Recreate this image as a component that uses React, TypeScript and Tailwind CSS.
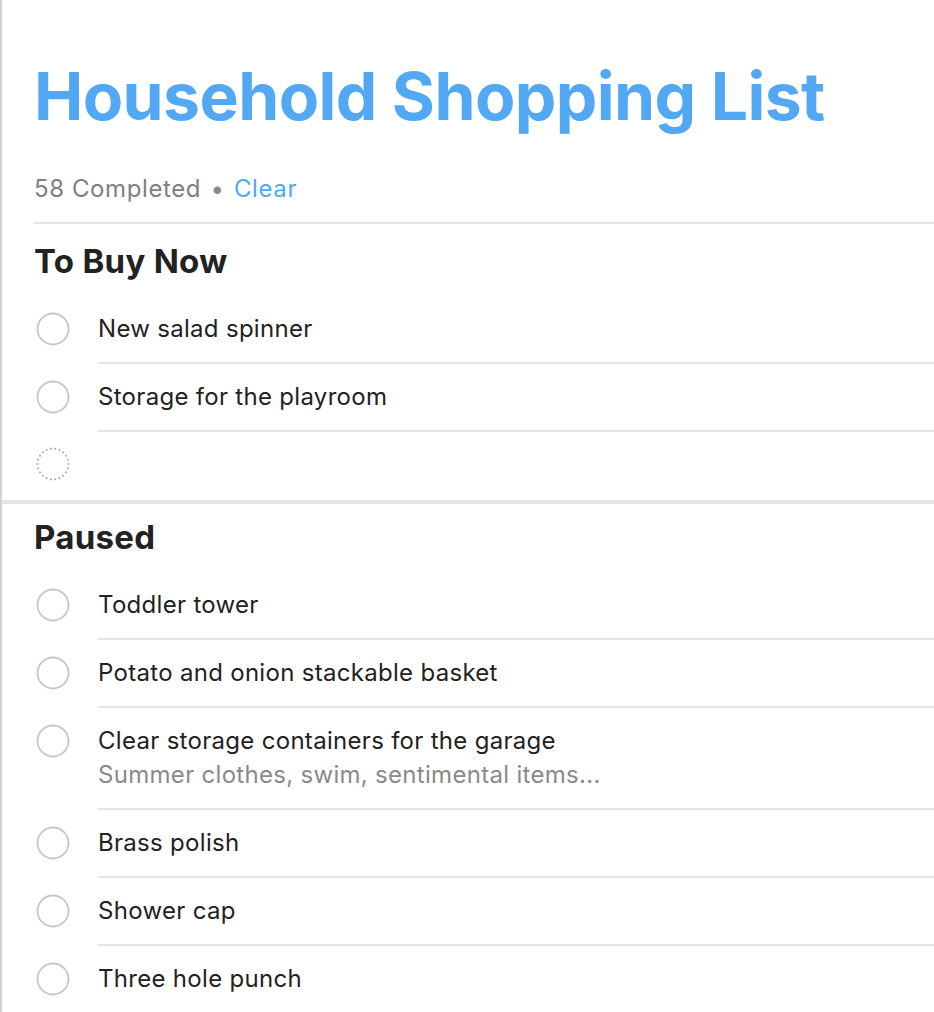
import React from 'react';

interface Item {
  title: string;
  note?: string;
}

const toBuyNow: Item[] = [
  { title: 'New salad spinner' },
  { title: 'Storage for the playroom' },
];

const paused: Item[] = [
  { title: 'Toddler tower' },
  { title: 'Potato and onion stackable basket' },
  { title: 'Clear storage containers for the garage', note: 'Summer clothes, swim, sentimental items...' },
  { title: 'Brass polish' },
  { title: 'Shower cap' },
  { title: 'Three hole punch' },
];

function Circle({ dotted = false }: { dotted?: boolean }) {
  return (
    <svg width="34" height="34" viewBox="0 0 34 34" className="shrink-0">
      <circle
        cx="17"
        cy="17"
        r="15.5"
        fill="none"
        stroke={dotted ? '#a9a9a9' : '#c7c7c7'}
        strokeWidth={dotted ? 2 : 1.8}
        strokeDasharray={dotted ? '0.1 4.3' : undefined}
        strokeLinecap="round"
      />
    </svg>
  );
}

function Row({ item, last }: { item: Item; last?: boolean }) {
  return (
    <div className="flex">
      <div className="w-[96px] shrink-0 pl-[34px] pt-[16px]">
        <Circle />
      </div>
      <div className={`flex-1 py-[16px] ${last ? '' : 'border-b-2 border-[#e4e4e4]'}`}>
        <div className="text-[24px] leading-[34px] tracking-[0.3px] text-[#222]">{item.title}</div>
        {item.note && (
          <div className="text-[24px] leading-[34px] tracking-[0.3px] text-[#8a8a8a]">{item.note}</div>
        )}
      </div>
    </div>
  );
}

export default function App() {
  return (
    <div className="min-h-screen bg-white border-l-2 border-[#d2d2d2] font-['Inter','Noto_Sans',sans-serif] overflow-hidden">
      {/* header */}
      <div className="pl-8">
        <div className="border-b-2 border-[#e4e4e4]">
          <h1 className="pt-[56px] text-[66px] leading-[80px] font-bold tracking-[-0.6px] text-[#52a8f2] whitespace-nowrap">
            Household Shopping List
          </h1>
          <div className="pt-[38px] pb-[18px] text-[24px] leading-[30px] tracking-[0.6px] text-[#808080]">
            58 Completed <span className="mx-[2px] text-[#8a8a8a]">•</span> <span className="text-[#52a8f2]">Clear</span>
          </div>
        </div>
      </div>

      {/* To Buy Now */}
      <section className="border-b-4 border-[#e5e5e5]">
        <h2 className="pl-8 h-[72px] flex items-center pt-[4px] text-[33px] tracking-[0.3px] font-bold text-[#222]">
          To Buy Now
        </h2>
        {toBuyNow.map(item => (
          <Row key={item.title} item={item} />
        ))}
        <div className="flex h-[68px]">
          <div className="w-[96px] shrink-0 pl-[34px] pt-[15px]">
            <Circle dotted />
          </div>
        </div>
      </section>

      {/* Paused */}
      <section>
        <h2 className="pl-8 h-[68px] flex items-center text-[33px] tracking-[0.3px] font-bold text-[#222]">Paused</h2>
        {paused.map((item, i) => (
          <Row key={item.title} item={item} last={i === paused.length - 1} />
        ))}
      </section>
    </div>
  );
}
